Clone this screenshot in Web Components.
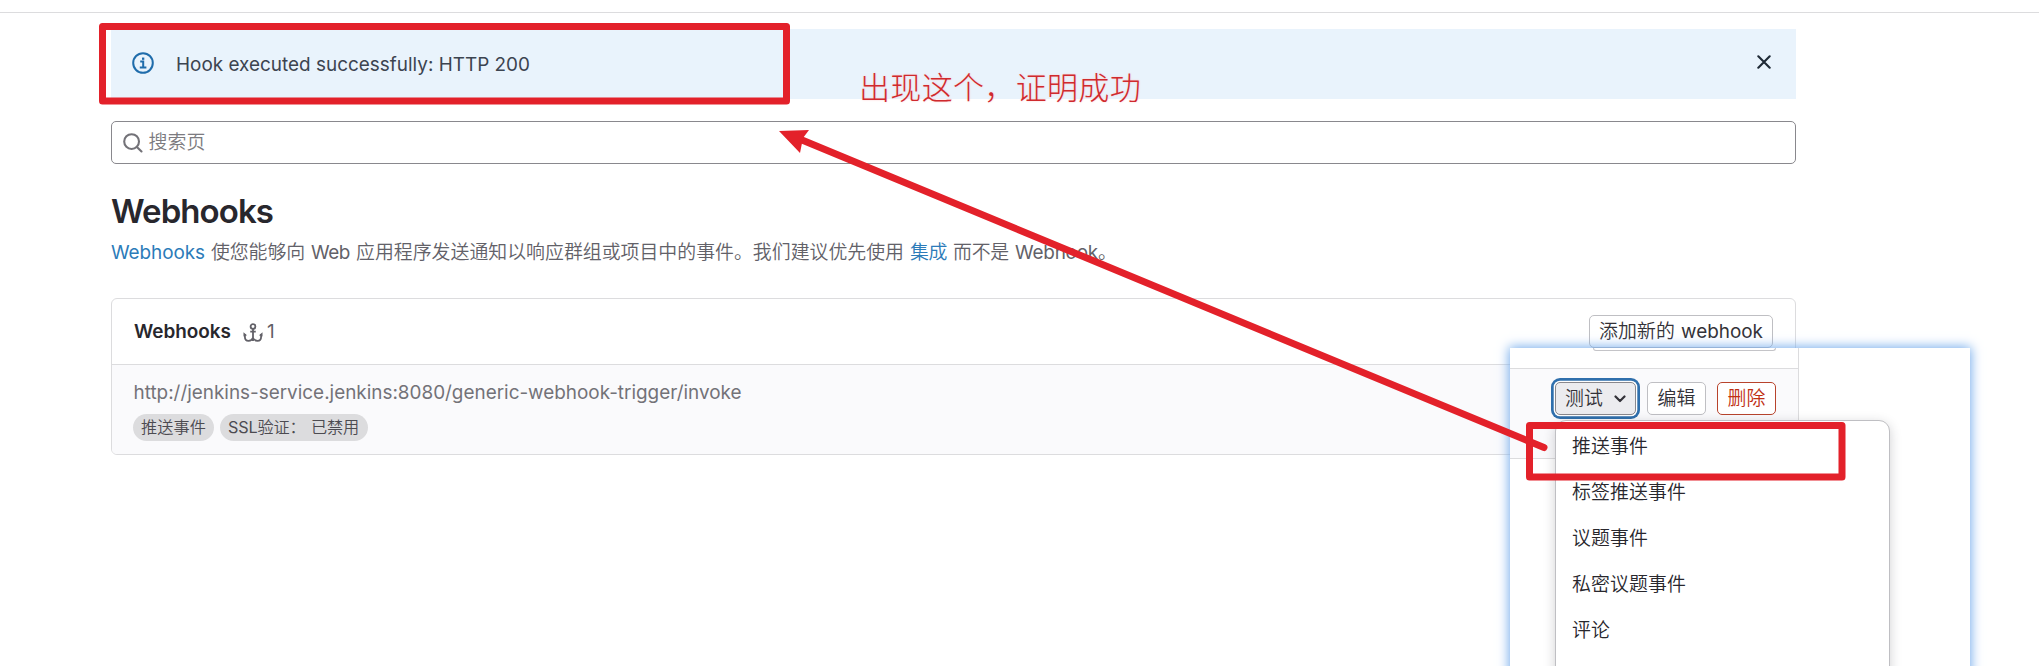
<!DOCTYPE html>
<html lang="zh-CN">
<head>
<meta charset="utf-8">
<title>Webhooks</title>
<style>
html,body{margin:0;height:666px;overflow:hidden;background:#fff}
body{font:400 18.9px/24px Inter,"Noto Sans CJK SC",sans-serif;color:#333238}
</style>
</head>
<body>
<webhooks-page></webhooks-page>

<template id="t-run"><style>:host{display:inline-block;white-space:pre;flex:none}:host([cjk]){font-weight:350;font-family:Inter,"Noto Sans CJK SC DemiLight","Noto Sans CJK SC",sans-serif}</style><slot></slot></template>

<template id="t-alert"><style>
:host{display:flex;box-sizing:border-box;height:70px;background:#e9f3fc;color:#3a4350;padding:0 25px 0 21px;align-items:center}
.i{margin:0 22px 2px 0;width:22px;height:22px;flex:none}
.m{flex:1;padding-top:1px;color:#3c4450}
.x{width:14px;height:14px;margin-bottom:4px}
</style>
<svg class="i" viewBox="0 0 22 22" fill="none" stroke="#1f6cab" stroke-width="2"><circle cx="11" cy="11" r="9.8"/><path d="M8.2 9.4h3v5.8M7.8 15.5h6.6"/><path d="M10 6.7h2.3" stroke-width="2.3"/></svg>
<div class="m"><slot></slot></div>
<svg class="x" viewBox="0 0 14 14" stroke="#1f2a36" stroke-width="2.1" stroke-linecap="round"><path d="M1.3 1.3l11.4 11.4M12.7 1.3L1.3 12.7"/></svg>
</template>

<template id="t-search"><style>
:host{display:flex;box-sizing:border-box;height:43px;margin-top:22px;border:1px solid #89888d;border-radius:5px;align-items:center;padding-left:11px;color:#7c7b80}
svg{width:20px;height:20px;margin-right:5.5px}
</style>
<svg viewBox="0 0 20 20" fill="none" stroke="#737278" stroke-width="2.1"><circle cx="8.6" cy="8.6" r="7.4"/><path d="M13.9 13.9l4.6 4.6" stroke-linecap="round"/></svg>
<slot></slot>
</template>

<template id="t-btn"><style>
:host{display:inline-flex;box-sizing:border-box;height:33px;border:1px solid #bfbfc3;border-radius:5px;background:#fff;color:#333238;align-items:center;justify-content:center;flex:none}
:host([kind=danger]){border:1.4px solid #b8432c;color:#c02f12}
:host([kind=active]){background:#ececef;border-color:#89888d;box-shadow:0 0 0 1.3px #fff,0 0 0 4px #2f6fac}
svg{width:12px;height:8px;margin-left:11px}
:host(:not([kind=active])) svg{display:none}
</style><slot></slot><svg viewBox="0 0 12 8" fill="none" stroke="#333238" stroke-width="2.2" stroke-linecap="round" stroke-linejoin="round"><path d="M1.5 1.5L6 6l4.500-4.500"/></svg></template>

<template id="t-pill"><style>
:host{display:inline-flex;box-sizing:border-box;height:27px;border-radius:14px;background:#dcdcde;color:#4c4b51;font-size:16.2px;align-items:center;padding:0 8px 2px}
</style><slot></slot></template>

<template id="t-card"><style>
:host{display:block;box-sizing:border-box;height:157px;margin-top:33px;border:1px solid #dcdcde;border-radius:6px;overflow:hidden}
header{display:flex;box-sizing:border-box;height:66px;border-bottom:1px solid #dcdcde;align-items:center;padding:0 22px}
.a{width:20px;height:20px;margin:2px 4px 0 12px}
.n{color:#626168}
.sp{flex:1}
b{font-weight:600;color:#28272d}
.row{height:90px;background:#fafafc;padding:16px 22px 0 21px;box-sizing:border-box}
.u{color:#737278;height:24px;margin-left:.5px}
.p{display:flex;gap:6px;margin-top:9px}
</style>
<header><b><text-run w="97">Webhooks</text-run></b>
<svg class="a" viewBox="0 0 21 21" fill="none" stroke="#626168" stroke-width="1.9"><circle cx="10.500" cy="3.700" r="2.500"/><path d="M10.500 6.200v12.800M7.600 9h5.800M2 11.500v3.200c0 2.600 1.600 4 3.800 4 2.400 0 4-1.200 4.700-3.200.7 2 2.300 3.200 4.700 3.200 2.200 0 3.800-1.400 3.800-4v-3.200"/><path d="M.5 14.200V9.600l3.700 3.300zM20.500 14.200V9.600l-3.700 3.300z" fill="#626168" stroke="none"/></svg>
<span class="n">1</span><span class="sp"></span>
<gl-button style="width:184px"><text-run cjk w="76">添加新的</text-run><text-run w="6"> </text-run><text-run w="82">webhook</text-run></gl-button></header>
<div class="row"><div class="u"><text-run w="608">http://jenkins-service.jenkins:8080/generic-webhook-trigger/invoke</text-run></div>
<div class="p"><label-pill style="width:81px"><text-run cjk w="65">推送事件</text-run></label-pill><label-pill style="width:148px"><text-run w="29.500">SSL</text-run><text-run cjk w="48" style="margin-right:5.500px">验证：</text-run><text-run cjk w="48">已禁用</text-run></label-pill></div></div>
</template>

<template id="t-menu"><style>
:host{display:block;box-sizing:border-box;width:335px;height:300px;background:#fff;border:1px solid #bfbfc3;border-radius:11px;box-shadow:0 3px 12px rgba(40,40,50,.22);padding-top:3px}
::slotted(div){height:46px;line-height:46px;padding-left:16px;color:#28272d}
</style><slot></slot></template>

<template id="t-popout"><style>
:host{position:absolute;left:1510px;top:348px;width:460px;height:340px;background:#fff;box-shadow:0 0 11px 1px #72aaeb;overflow:visible}
.top{width:289px;height:21px;box-sizing:border-box;border-right:1px solid #dcdcde;border-bottom:1px solid #dcdcde}
.ghost{margin-left:83px;width:183px;height:3px;box-sizing:border-box;border:1px solid #c4c4c8;border-top:0;border-radius:0 0 5px 5px}
.row{width:289px;height:90px;box-sizing:border-box;background:#fafafc;border-right:1px solid #dcdcde;border-bottom:1px solid #dcdcde;display:flex;padding:13px 0 0 45px}
gl-button{margin-right:11px}
drop-menu{position:absolute;left:45px;top:72px}
</style>
<div class="top"><div class="ghost"></div></div>
<div class="row"><gl-button kind="active" style="width:81px"><text-run cjk w="38">测试</text-run></gl-button><gl-button style="width:59px"><text-run cjk w="38">编辑</text-run></gl-button><gl-button kind="danger" style="width:59px"><text-run cjk w="38">删除</text-run></gl-button></div>
<drop-menu><div><text-run cjk w="76">推送事件</text-run></div><div><text-run cjk w="114">标签推送事件</text-run></div><div><text-run cjk w="76">议题事件</text-run></div><div><text-run cjk w="114">私密议题事件</text-run></div><div><text-run cjk w="38">评论</text-run></div></drop-menu>
</template>

<template id="t-notes"><style>
:host{position:absolute;inset:0}
svg{display:block}
p{position:absolute;left:859px;top:66px;margin:0;font:300 31px/40px "Noto Sans CJK SC",sans-serif;color:#cf2a2e;text-shadow:0 0 2px #ffc4c4}
</style>
<svg width="2039" height="666" fill="none" stroke="#e3212a" stroke-width="7" stroke-linejoin="round" stroke-linecap="round"><rect x="102.500" y="26.500" width="684" height="74.500"/><rect x="1529.500" y="425.500" width="312.500" height="51.500"/><path d="M1544 447.500L802 140"/><path d="M779 131l30-1-6 8-3 15z" fill="#e3212a" stroke="none"/></svg>
<p><text-run w="282">出现这个，证明成功</text-run></p>
</template>

<template id="t-page"><style>
:host{display:block;position:relative;height:666px;overflow:hidden}
.bar{height:12px;border-bottom:1px solid #dcdcde}
main{width:1685px;margin:16px 0 0 111px}
h1{margin:29px 0 0;font:600 33px/36px Inter,sans-serif;color:#28272d}
.d{margin-top:12px;height:24px;color:#626168;display:flex}
a{color:#2b7bb9}
.d>*{margin-right:6px}
</style>
<div class="bar"></div>
<main><alert-banner><text-run w="354">Hook executed successfully: HTTP 200</text-run></alert-banner>
<search-box><text-run cjk w="57">搜索页</text-run></search-box>
<h1><text-run w="162">Webhooks</text-run></h1>
<div class="d"><a><text-run w="94">Webhooks</text-run></a><text-run cjk w="94">使您能够向</text-run><text-run w="39">Web</text-run><text-run cjk w="548">应用程序发送通知以响应群组或项目中的事件。我们建议优先使用</text-run><a><text-run cjk w="37">集成</text-run></a><text-run cjk w="56">而不是</text-run><text-run w="83" style="margin-right:0">Webhook</text-run><text-run cjk w="19">。</text-run></div>
<hook-card></hook-card></main>
<popout-shot></popout-shot><note-layer></note-layer>
</template>

<script>
function define(name, tpl){
  customElements.define(name, class extends HTMLElement{
    constructor(){super();this.attachShadow({mode:'open'}).append(document.importNode(document.getElementById(tpl).content,true));}
  });
}
// An inline run of text whose letter spacing is adjusted to fill a given width.
customElements.define('text-run', class extends HTMLElement{
  constructor(){super();this.attachShadow({mode:'open'}).append(document.getElementById('t-run').content.cloneNode(true));}
  fit(){
    const w=+this.getAttribute('w'), n=[...this.textContent].length;
    this.style.letterSpacing='0';
    const natural=this.getBoundingClientRect().width;
    this.style.letterSpacing=((w-natural)/n)+'px';
  }
});
define('alert-banner','t-alert');
define('search-box','t-search');
define('gl-button','t-btn');
define('label-pill','t-pill');
define('hook-card','t-card');
define('drop-menu','t-menu');
define('popout-shot','t-popout');
define('note-layer','t-notes');
define('webhooks-page','t-page');
(function walk(root){
  root.querySelectorAll('*').forEach(e=>{ if(e.fit) e.fit(); if(e.shadowRoot) walk(e.shadowRoot); });
})(document);
</script>
</body>
</html>
